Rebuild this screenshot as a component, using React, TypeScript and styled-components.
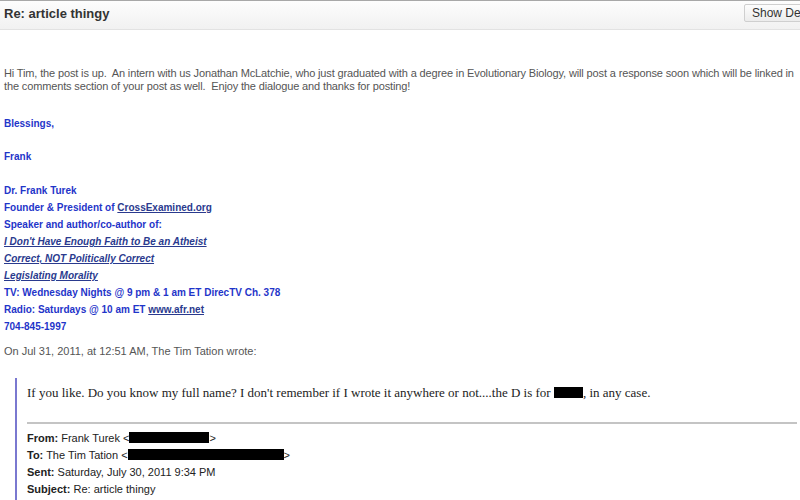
import React from "react";
import styled, { createGlobalStyle } from "styled-components";

const Global = createGlobalStyle`
  html, body { margin: 0; padding: 0; background: #fff; overflow: hidden; }
  body { width: 800px; height: 500px; font-family: "Liberation Sans", Arial, sans-serif; }
`;

const Page = styled.div`
  width: 800px;
  height: 500px;
  overflow: hidden;
  border-top: 1px solid #a8a8a8;
  box-sizing: border-box;
`;

const Header = styled.div`
  height: 29px;
  display: flex;
  align-items: center;
  justify-content: space-between;
  padding: 0 0 0 4px;
  background: linear-gradient(#fdfdfd, #f1f1f1);
  border-bottom: 1px solid #e2e2e2;
  box-sizing: border-box;
  overflow: hidden;
`;

const Title = styled.div`
  font-weight: bold;
  font-size: 13px;
  color: #333;
  margin-top: -4px;
`;

const DetailsButton = styled.button`
  font-family: "Liberation Sans", Arial, sans-serif;
  font-size: 12px;
  color: #333;
  height: 18px;
  padding: 0 7px;
  margin-top: -4px;
  margin-right: -14px;
  border: 1px solid #cfcfcf;
  border-radius: 2px;
  background: linear-gradient(#fdfdfd, #ececec);
  white-space: nowrap;
  flex-shrink: 0;
  width: 70px;
  overflow: hidden;
  text-align: left;
`;

const Body = styled.div`
  padding: 37px 0 0 4px;
`;

const Para = styled.p`
  margin: 0;
  font-size: 11px;
  line-height: 13px;
  color: #555;
  letter-spacing: -0.14px;
`;

const Sig = styled.div`
  margin-top: 22px;
  color: #1f35c9;
  font-weight: bold;
  font-size: 10px;
`;

const SigLine = styled.div<{ $gap?: number }>`
  height: 17px;
  line-height: 17px;
  margin-bottom: ${(p) => p.$gap ?? 0}px;
  white-space: nowrap;
`;

const SigLink = styled.a<{ $italic?: boolean }>`
  color: #2a3a8e;
  text-decoration: underline;
  font-style: ${(p) => (p.$italic ? "italic" : "normal")};
`;

const Wrote = styled.div`
  margin-top: 10px;
  font-size: 11px;
  color: #555;
`;

const Quote = styled.blockquote`
  margin: 21px 0 0 11px;
  border-left: 2px solid #7a78d0;
  padding-left: 10px;
  height: 200px;
`;

const QuoteText = styled.p`
  margin: 0;
  padding-top: 7px;
  font-family: "Liberation Serif", "Times New Roman", serif;
  font-size: 13px;
  color: #222;
`;

const Redact = styled.span<{ $w: number }>`
  display: inline-block;
  width: ${(p) => p.$w}px;
  height: 11px;
  background: #000;
  vertical-align: -1px;
`;

const Rule = styled.hr`
  margin: 21px 3px 0 0;
  border: 0;
  border-top: 2px solid #c4c4c4;
`;

const Meta = styled.div`
  margin-top: 6px;
  font-size: 11px;
  color: #222;
`;

const MetaLine = styled.div`
  height: 17px;
  line-height: 17px;
  white-space: nowrap;
`;

export default function App() {
  return (
    <>
      <Global />
      <Page>
        <Header>
          <Title>Re: article thingy</Title>
          <DetailsButton>Show Details</DetailsButton>
        </Header>
        <Body>
          <Para>
            Hi Tim, the post is up.&nbsp; An intern with us Jonathan McLatchie, who just graduated with a degree in
            Evolutionary Biology, will post a response soon which will be linked in the comments section of your post
            as well.&nbsp; Enjoy the dialogue and thanks for posting!
          </Para>
          <Sig>
            <SigLine $gap={16}>Blessings,</SigLine>
            <SigLine $gap={17}>Frank</SigLine>
            <SigLine>Dr. Frank Turek</SigLine>
            <SigLine>
              Founder &amp; President of <SigLink>CrossExamined.org</SigLink>
            </SigLine>
            <SigLine>Speaker and author/co-author of:</SigLine>
            <SigLine>
              <SigLink $italic>I Don't Have Enough Faith to Be an Atheist</SigLink>
            </SigLine>
            <SigLine>
              <SigLink $italic>Correct, NOT Politically Correct</SigLink>
            </SigLine>
            <SigLine>
              <SigLink $italic>Legislating Morality</SigLink>
            </SigLine>
            <SigLine>TV: Wednesday Nights @ 9 pm &amp; 1 am ET DirecTV Ch. 378</SigLine>
            <SigLine>
              Radio: Saturdays @ 10 am ET <SigLink>www.afr.net</SigLink>
            </SigLine>
            <SigLine>704-845-1997</SigLine>
          </Sig>
          <Wrote>On Jul 31, 2011, at 12:51 AM, The Tim Tation wrote:</Wrote>
          <Quote>
            <QuoteText>
              If you like. Do you know my full name? I don't remember if I wrote it anywhere or not....the D is for{" "}
              <Redact $w={29} />, in any case.
            </QuoteText>
            <Rule />
            <Meta>
              <MetaLine>
                <b>From:</b> Frank Turek &lt;<Redact $w={80} />&gt;
              </MetaLine>
              <MetaLine>
                <b>To:</b> The Tim Tation &lt;<Redact $w={156} />&gt;
              </MetaLine>
              <MetaLine>
                <b>Sent:</b> Saturday, July 30, 2011 9:34 PM
              </MetaLine>
              <MetaLine>
                <b>Subject:</b> Re: article thingy
              </MetaLine>
            </Meta>
          </Quote>
        </Body>
      </Page>
    </>
  );
}
